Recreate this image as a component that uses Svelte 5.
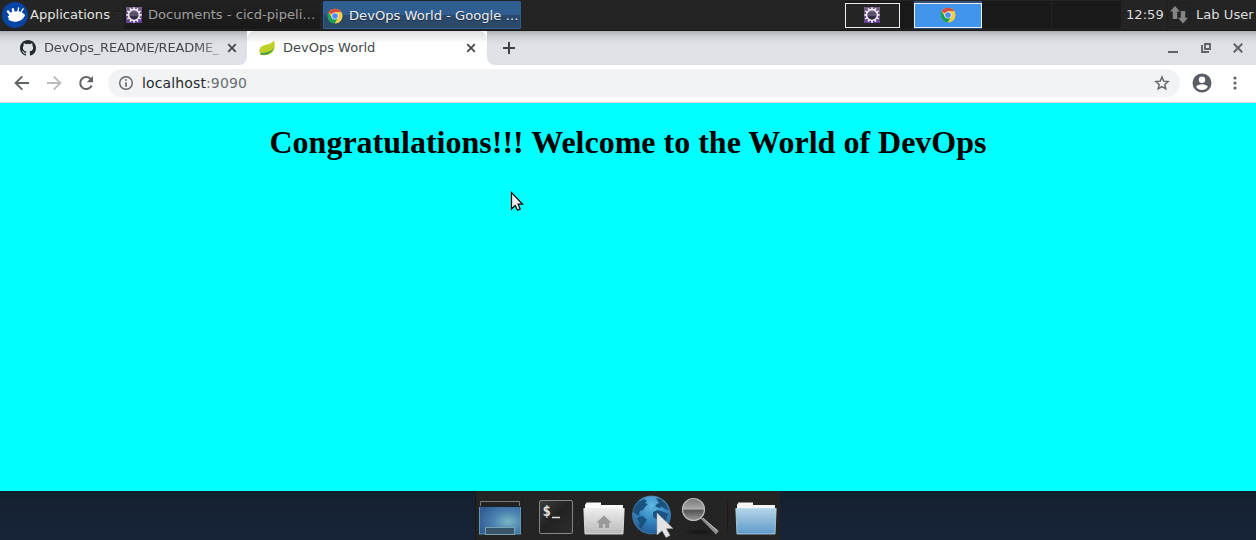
<script>
  const teeth = Array.from({ length: 12 }, (_, i) => i * 30);
</script>

{#snippet eclipse()}
  <svg width="16" height="16" viewBox="0 0 16 16">
    <defs>
      <linearGradient id="ecl" x1="0" y1="0" x2="0" y2="1">
        <stop offset="0" stop-color="#7d5f8c" /><stop offset=".5" stop-color="#66507c" /><stop offset="1" stop-color="#6a3fa0" />
      </linearGradient>
      <linearGradient id="eclc" x1="0" y1="0" x2="0" y2="1">
        <stop offset="0" stop-color="#8d7ca0" /><stop offset=".5" stop-color="#3a3450" /><stop offset="1" stop-color="#27213a" />
      </linearGradient>
    </defs>
    <rect width="16" height="16" fill="url(#ecl)" />
    {#each teeth as a}
      <rect x="7.2" y=".3" width="1.6" height="2.5" fill="#f4f1f4" transform="rotate({a} 8 8)" />
    {/each}
    <circle cx="8" cy="8" r="5.4" fill="url(#eclc)" stroke="#f1eef2" stroke-width="1.5" />
    <path d="M4 8h8" stroke="#8d84a0" stroke-width=".8" />
  </svg>
{/snippet}

{#snippet chrome()}
  <svg width="16" height="16" viewBox="0 0 48 48">
    <circle cx="24" cy="24" r="22" fill="#fbc93d" />
    <path d="M24 24L4.9 13A22 22 0 0 1 43.1 13H24z" fill="#dd4b3e" />
    <path d="M4.9 13A22 22 0 0 0 24 46L33.5 29.5 24 24 14.5 29.5z" fill="#12a05c" />
    <path d="M43.1 13H24v11l9.5 5.5L24 46A22 22 0 0 0 43.1 13z" fill="#fccd48" />
    <circle cx="24" cy="24" r="10.5" fill="#f5f7fb" />
    <circle cx="24" cy="24" r="8.5" fill="#4c8bf5" />
  </svg>
{/snippet}

{#snippet cross()}
  <svg width="10" height="10" viewBox="0 0 10 10"><path d="M1.2 1.2l7.6 7.6M8.8 1.2L1.2 8.8" stroke="#45484c" stroke-width="1.8" /></svg>
{/snippet}

<div class="screen">
  <header class="panel">
    <div class="apps">
      <svg width="26" height="26" viewBox="0 0 26 26">
        <circle cx="13" cy="13" r="13" fill="#0644a6" />
        <path d="M7 12.500C7 10.800 9 10 12 10c1.500-.8 3.500-1 5.500-.4 2.500.8 4.500 2.200 5.500 3.600-1 3-3.600 5.200-6.800 6-3 .9-6.500.6-8-.6-1.800-.2-2.200-1.200-1.200-2.600-1.700-.6-1.700-2 0-2.200z" fill="#fff" />
        <path d="M6 9.500l3 4M10.800 7.300l1.200 5" stroke="#fff" stroke-width="2.400" stroke-linecap="round" />
        <path d="M15.800 10l.8-4M18.800 10.500l2.300-3.700" stroke="#fff" stroke-width="1.300" stroke-linecap="round" />
      </svg>
      <span>Applications</span>
    </div>
    <i class="grip"></i>
    <div class="task idle">{@render eclipse()}<span>Documents - cicd-pipeli…</span></div>
    <div class="task active">{@render chrome()}<span>DevOps World - Google …</span></div>
    <div class="pager">
      <div class="space first"><div class="win">{@render eclipse()}</div></div>
      <div class="space current"><div class="win">{@render chrome()}</div></div>
      <div class="space"></div>
      <div class="space"></div>
    </div>
    <span class="clock">12:59</span>
    <div class="net">
      <svg width="18" height="18" viewBox="0 0 18 18" fill="#858585"><path d="M0 5.500L5 0l5 5.500H7.200V13H2.800V5.500z" /><path d="M8 11.800h2.800V5h4.400v6.800H18L13 17.500z" /></svg>
    </div>
    <span class="user">Lab User</span>
  </header>

  <div class="tabs">
    <div class="tab back">
      <svg width="16" height="16" viewBox="0 0 16 16"><path fill="#24292e" d="M8 0C3.58 0 0 3.58 0 8c0 3.54 2.29 6.53 5.47 7.59.4.07.55-.17.55-.38 0-.19-.01-.82-.01-1.49-2.01.37-2.53-.49-2.69-.94-.09-.23-.48-.94-.82-1.13-.28-.15-.68-.52-.01-.53.63-.01 1.08.58 1.23.82.72 1.21 1.87.87 2.33.66.07-.52.28-.87.51-1.07-1.78-.2-3.64-.89-3.64-3.95 0-.87.31-1.59.82-2.15-.08-.2-.36-1.02.08-2.12 0 0 .67-.21 2.2.82a7.6 7.6 0 0 1 4 0c1.53-1.04 2.2-.82 2.2-.82.44 1.1.16 1.92.08 2.12.51.56.82 1.27.82 2.15 0 3.07-1.87 3.75-3.65 3.95.29.25.54.73.54 1.48 0 1.07-.01 1.93-.01 2.2 0 .21.15.46.55.38A8 8 0 0 0 16 8c0-4.42-3.58-8-8-8z" /></svg>
      <span class="title fade">DevOps_README/README_</span>
      {@render cross()}
    </div>
    <div class="tab front">
      <svg width="16" height="16" viewBox="0 0 16 16"><path d="M14.800.5c2.200 5.500.9 11-4.300 13.500-3 1.400-6.500 1.500-9 .7C-.7 11 .3 7 4 5.700 8 4.200 12 4.500 14.800.5z" fill="#bfd126" /><path d="M15.200 6.500C13.500 11 8 12.500 2 12.800l-.7 1.700c5 1.600 13 .3 13.900-8z" fill="#8abf28" /><path d="M1.500 14.500c5.500.7 9.800-.7 12.700-5.500-3 3-7 4.200-12.400 4.300z" fill="#45945a" /></svg>
      <span class="title">DevOps World</span>
      {@render cross()}
    </div>
    <div class="strip">
      <svg width="12" height="12" viewBox="0 0 12 12"><path d="M6 0v12M0 6h12" stroke="#3c4043" stroke-width="2" /></svg>
      <div class="controls">
        <svg width="10" height="12" viewBox="0 0 10 12"><path d="M0 10h10" stroke="#5f6368" stroke-width="2" /></svg>
        <svg width="10" height="10" viewBox="0 0 10 10"><path d="M4 1h5v5H4zM1 2v7h7" fill="none" stroke="#5f6368" stroke-width="1.900" /></svg>
        <svg width="10" height="10" viewBox="0 0 10 10"><path d="M.8.8l8.400 8.400M9.200.8L.8 9.200" stroke="#5f6368" stroke-width="2" /></svg>
      </div>
    </div>
  </div>

  <div class="toolbar">
    <svg width="16" height="16" viewBox="0 0 16 16" fill="none" stroke="#5f6368" stroke-width="1.900"><path d="M15 8H2M8.300 1.300L1.600 8l6.700 6.700" /></svg>
    <svg width="16" height="16" viewBox="0 0 16 16" fill="none" stroke="#babcbe" stroke-width="1.900"><path d="M1 8h13M7.700 1.300L14.400 8l-6.700 6.700" /></svg>
    <svg width="16" height="16" viewBox="0 0 16 16"><path d="M13.700 10.500A6 6 0 1 1 12.400 3.800L14 5.500" fill="none" stroke="#5f6368" stroke-width="2" /><path d="M15 1v6.300H8.700z" fill="#5f6368" /></svg>
    <div class="address">
      <svg width="14" height="14" viewBox="0 0 14 14"><circle cx="7" cy="7" r="6.300" fill="none" stroke="#5f6368" stroke-width="1.400" /><path d="M7 3.200v1.600M7 6.200v4.500" stroke="#5f6368" stroke-width="1.600" /></svg>
      <span class="url">localhost<em>:9090</em></span>
      <svg width="16" height="16" viewBox="0 0 16 16"><path d="M8 1.900l1.700 4.200 4.500.4-3.400 3 1 4.400L8 11.600l-3.800 2.300 1-4.400-3.400-3 4.500-.4z" fill="none" stroke="#5f6368" stroke-width="1.400" /></svg>
    </div>
    <svg width="20" height="20" viewBox="0 0 20 20"><path fill-rule="evenodd" fill="#5a5d65" d="M10 .5a9.500 9.500 0 1 0 0 19 9.500 9.500 0 0 0 0-19zm0 3a3.200 3.200 0 1 1 0 6.400 3.200 3.200 0 0 1 0-6.400zM10 17a7 7 0 0 1-5.900-3.200c.5-1.700 3.800-2.600 5.900-2.600s5.400.9 5.900 2.600A7 7 0 0 1 10 17z" /></svg>
    <svg class="dots" width="4" height="14" viewBox="0 0 4 14" fill="#5f6368"><circle cx="2" cy="2" r="1.600" /><circle cx="2" cy="7" r="1.600" /><circle cx="2" cy="12" r="1.600" /></svg>
  </div>

  <main>
    <h1>Congratulations!!! Welcome to the World of DevOps</h1>
    <svg class="pointer" width="17" height="24" viewBox="0 0 17 24"><path d="M1.500 1.500V18l3.700-3.500 2.300 4.800 2.700-1.300-2.100-4.800h4.400z" fill="#eee" stroke="#000" stroke-width="1.200" /></svg>
  </main>

  <footer>
    <div class="dock">
      <svg width="44" height="42" viewBox="0 0 44 42">
        <defs><radialGradient id="desk" cx=".7" cy=".55" r=".75"><stop offset="0" stop-color="#78b4c4" /><stop offset=".5" stop-color="#4b82b1" /><stop offset="1" stop-color="#315d92" /></radialGradient></defs>
        <path d="M2.500 7V2.500h39V7" fill="#222" stroke="#777" />
        <rect x="1.500" y="7.500" width="41" height="27.500" fill="url(#desk)" stroke="#5f94bb" />
        <path d="M1 7.500h42" stroke="#172330" />
        <rect x="7.500" y="28.500" width="29" height="7" fill="#38566c" stroke="#78a0ae" />
      </svg>
      <i class="sep"></i>
      <svg width="36" height="42" viewBox="0 0 36 42">
        <defs><linearGradient id="term" x1="0" y1="0" x2="1" y2="1"><stop offset="0" stop-color="#3b3b3b" /><stop offset=".5" stop-color="#222" /><stop offset="1" stop-color="#2d2d2d" /></linearGradient></defs>
        <rect x="1.500" y="1.500" width="33" height="33" rx="1.500" fill="url(#term)" stroke="#858585" />
        <text x="4.500" y="16.500" class="prompt">$</text><path d="M14 18.500h8" stroke="#ddd" stroke-width="1.500" />
      </svg>
      <svg width="42" height="42" viewBox="0 0 42 42">
        <defs><linearGradient id="home" x1="0" y1="0" x2="0" y2="1"><stop offset="0" stop-color="#ededed" /><stop offset="1" stop-color="#b9b9b9" /></linearGradient></defs>
        <path d="M2 11V6l1.500-2.500H18V6h22v5z" fill="#fafafa" />
        <path d="M.8 9.500h40.400L40 35H2z" fill="url(#home)" stroke="#eee" stroke-width=".8" />
        <path d="M21 16.500l7 6.500-1.200 1.200-.8-.7V29h-3.800v-4h-2.400v4H16v-5.500l-.8.7L14 23z" fill="#999" />
      </svg>
      <svg width="42" height="44" viewBox="0 0 42 44">
        <defs><radialGradient id="sea" cx=".5" cy=".25" r=".8"><stop offset="0" stop-color="#5cb9e2" /><stop offset=".5" stop-color="#3587c2" /><stop offset="1" stop-color="#225594" /></radialGradient></defs>
        <circle cx="19.500" cy="20" r="19" fill="url(#sea)" stroke="#5596bd" stroke-width=".6" />
        <path d="M2 13L6 7l6-3 3 2-2 2 3 1-3 3-2 3-3 1-1 3 2 2-4-1-4-3zM6 22l5-1 4 4-3 4-2 5-3-2v-5l-2-3zM24 3l5 1 5 5 3 6-4-1-3-2-3 1-4-2 2-2 2-1-2-3zM21 17l5-2 6 2 4 2-2 6-3 5-3 1-2-6-5-3z" fill="#1c527e" />
        <path d="M25 18v22l5-4.500 4 7 4-2-3.700-7H41z" fill="#e3e3e3" stroke="#aaa" stroke-width=".5" />
      </svg>
      <svg width="42" height="42" viewBox="0 0 42 42">
        <defs>
          <linearGradient id="lens" x1="0" y1="0" x2="0" y2="1"><stop offset="0" stop-color="#777" /><stop offset=".48" stop-color="#aaa" /><stop offset=".54" stop-color="#555" /><stop offset="1" stop-color="#999" /></linearGradient>
          <radialGradient id="shade"><stop offset="0" stop-color="#151515" /><stop offset="1" stop-color="#242424" /></radialGradient>
        </defs>
        <ellipse cx="20" cy="35" rx="17" ry="4" fill="url(#shade)" />
        <path d="M20 20l18 14-2 2.500z" fill="#8e8e8e" stroke="#8e8e8e" stroke-width="1.200" /><path d="M23 21l14 12.500" stroke="#ddd" stroke-width=".8" />
        <circle cx="13.500" cy="12.500" r="11" fill="url(#lens)" stroke="#bcbcbc" stroke-width="1.200" />
      </svg>
      <i class="sep last"></i>
      <svg width="42" height="42" viewBox="0 0 42 42">
        <defs><linearGradient id="fold" x1="0" y1="0" x2="0" y2="1"><stop offset="0" stop-color="#b4d4e8" /><stop offset="1" stop-color="#609bc9" /></linearGradient></defs>
        <path d="M2 11V6l1.500-2.500H18V6h22v5z" fill="#f5f5f5" />
        <path d="M.8 9.500h40.400L40 35H2z" fill="url(#fold)" stroke="#b9d9eb" stroke-width=".8" />
      </svg>
    </div>
  </footer>
</div>

<style>
  :global(body) { overflow: hidden; }
  .screen { width: 1256px; height: 540px; display: flex; flex-direction: column; font: 13.1px "DejaVu Sans", sans-serif; overflow: hidden; }
  svg { display: block; flex: none; }
  .panel { height: 31px; box-sizing: border-box; border-bottom: 1px solid #181818; background: #242424; color: #ddd; display: flex; align-items: center; white-space: nowrap; flex: none; }
  .apps { width: 116px; padding-left: 2px; box-sizing: border-box; display: flex; align-items: center; gap: 2px; color: #e2e2e2; }
  .apps span, .clock, .user { padding-bottom: 1px; }
  .grip { width: 4px; height: 8px; margin-right: 4px; background: repeating-linear-gradient(#1b1b1b 0 1px, #2b2b2b 1px 3px); }
  .task { box-sizing: border-box; height: 28px; display: flex; align-items: center; }
  .task.idle { width: 196px; padding-left: 2px; gap: 6px; background: linear-gradient(#222, #191919); color: #9f9f9f; margin-right: 3px; }
  .idle span { padding-bottom: 1px; }
  .task.active { width: 198px; padding: 1px 0 0 3px; gap: 6px; background: linear-gradient(#305e91 0 50%, #29496e 52%, #2c4966); border: 1px solid #2b609a; color: #eee; border-radius: 1px; text-shadow: 0 1px #1c3047; }
  .pager { display: flex; width: 277px; margin-left: 324px; }
  .space { width: 70px; height: 28px; box-sizing: border-box; background: #191919; border-right: 1px solid #242424; display: flex; align-items: center; }
  .space.first { width: 69px; }
  .space.current { width: 68px; background: linear-gradient(#30527b, #254b76); border: 0; }
  .win { box-sizing: border-box; width: 55px; height: 25px; border: 1px solid #eee; background: #242424; display: flex; align-items: center; justify-content: center; padding-right: 1px; }
  .current .win { width: 68px; background: #4295ed; padding: 0; }
  .clock { margin-left: 4px; width: 40px; }
  .net { margin: 0 6px 0 1px; width: 23px; height: 26px; border: 1px solid #1f1f1f; box-sizing: border-box; display: grid; place-items: center; }
  .tabs { height: 34px; background: #fff; display: flex; flex: none; color: #45484c; font-size: 13px; }
  .tab { height: 34px; box-sizing: border-box; display: flex; align-items: center; gap: 8px; }
  .back, .strip { background: linear-gradient(#acafb2, #c6c9cd 4px, #d7dadf 9px, #dee1e6 14px); }
  .back { width: 247px; padding-left: 20px; border-bottom-right-radius: 8px; }
  .front { width: 240px; padding-left: 12px; background: linear-gradient(#ddd, #fff 12px); border-radius: 8px 8px 0 0; }
  .strip { flex: 1; display: flex; align-items: center; border-bottom-left-radius: 8px; padding: 0 13px 0 16px; }
  .title { width: 175px; white-space: nowrap; padding-bottom: 2px; }
  .fade { letter-spacing: -.2px; mask-image: linear-gradient(90deg, #000 88%, transparent 106%); }
  .controls { margin-left: auto; display: flex; align-items: center; gap: 22.5px; }
  .toolbar { height: 38px; box-sizing: border-box; border-bottom: 1px solid #d7d9dc; background: #fff; display: flex; align-items: center; padding: 0 20px 1px 14px; gap: 16px; flex: none; }
  .address { height: 28px; flex: none; width: 1072px; margin-left: -2px; box-sizing: border-box; padding: 0 10px 0 11px; border-radius: 14px; background: #f1f3f4; display: flex; align-items: center; gap: 9px; margin-right: -4px; }
  .url { flex: 1; font-size: 14px; letter-spacing: .13px; color: #27292c; }
  .url em { color: #6a6d72; font-style: normal; }
  .dots { margin-left: 4.5px; }
  main { flex: 1; background: #0ff; position: relative; }
  h1 { margin: 21px 0 0; text-align: center; font: bold 32px/37px "Liberation Serif", serif; color: #000; }
  .pointer { position: absolute; left: 510px; top: 88px; }
  footer { height: 49px; flex: none; background: linear-gradient(#10202a, #162234 14px, #172438); display: flex; padding-left: 475px; }
  .dock { width: 305px; background: #242424; display: flex; align-items: flex-start; box-sizing: border-box; padding: 8px 0 0 2px; border-left: 1px solid #171717; }
  .dock > :nth-child(3) { margin-left: 15px; }
  .dock > :nth-child(4) { margin-left: 9px; }
  .dock > :nth-child(5) { margin: -4px 0 0 7px; }
  .dock > :nth-child(6) { margin-left: 6px; margin-top: -2px; }
  .sep { width: 1px; height: 34px; background: #1c1c1c; }
  .sep.last { margin-left: 5px; }
  .dock > :last-child { margin-left: 7px; }
  .prompt { font: bold 14px "DejaVu Sans Mono", monospace; fill: #e2e2e2; }
</style>
